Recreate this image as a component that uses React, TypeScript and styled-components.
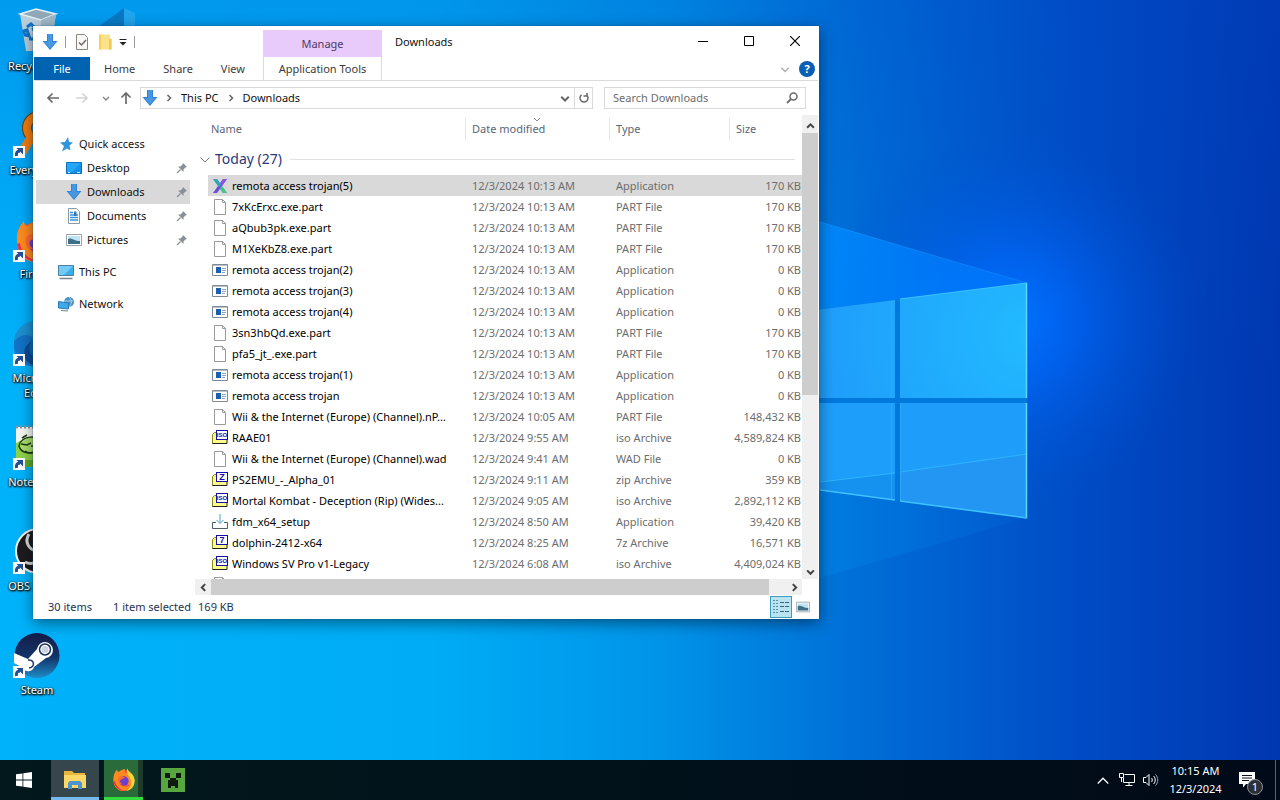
import React, { useState } from 'react'
import styled, { createGlobalStyle, css } from 'styled-components'

const GlobalStyle = createGlobalStyle`
  * {
    box-sizing: border-box;
  }

  body {
    margin: 0;
    font-family: 'Noto Sans', 'Open Sans', sans-serif;
    font-size: 11px;
    line-height: 16px;
    color: #111;
  }

  button,
  input {
    padding: 0;
    border: none;
    background: none;
    font: inherit;
    color: inherit;
  }

  a {
    color: inherit;
    text-decoration: none;
  }

  ul {
    margin: 0;
    padding: 0;
    list-style: none;
  }

  svg {
    display: block;
    flex: none;
  }
`

const Screen = styled.div`
  display: flex;
  flex-direction: column;
  height: 100vh;
  overflow: hidden;
`

const Desktop = styled.main`
  position: relative;
  flex: 1;
  min-height: 0;
  overflow: hidden;
  background: #0078d7;
`

const WallpaperSvg = styled.svg`
  position: absolute;
  inset: 0;
  width: 100%;
  height: 100%;
`

/* desktop shortcuts */

const ShortcutGrid = styled.div`
  position: relative;
  display: grid;
  grid-template-rows: repeat(7, 104px);
  grid-auto-flow: column;
  grid-auto-columns: 74px;
  justify-content: start;
  padding-top: 8px;
`

const Shortcut = styled.a`
  display: flex;
  flex-direction: column;
  align-items: center;
  gap: 2px;
  line-height: 15px;
  text-align: center;
  color: #fff;
  text-shadow: 0 1px 2px #000, 1px 1px 2px #000, 0 0 2px rgba(0, 0, 0, 0.8);
`

/* explorer window */

const ExplorerWindow = styled.section`
  position: absolute;
  top: 26px;
  left: 33px;
  display: flex;
  flex-direction: column;
  width: min(786px, calc(100% - 66px));
  height: min(593px, calc(100% - 52px));
  padding: 0 1px;
  background: #fff;
  box-shadow: 0 0 1px #0a4a7a, 0 4px 14px rgba(0, 0, 0, 0.45);
`

const TitleBar = styled.header`
  display: flex;
  height: 31px;
`

const QuickToolbar = styled.div`
  display: flex;
  align-items: center;
  width: 229px;
  padding-left: 8px;
`

const ToolButton = styled.button<{ $width?: number }>`
  display: flex;
  align-items: center;
  justify-content: center;
  width: ${({ $width = 23 }) => $width}px;
  height: 22px;
`

const ToolDivider = styled.span`
  width: 1px;
  height: 12px;
  margin: 0 7px;
  background: #9a9a9a;
`

const ManageTab = styled.div`
  width: 119px;
  margin-top: 4px;
  padding-top: 6px;
  text-align: center;
  color: #4c3a66;
  background: #e9cbfb;
`

const WindowTitle = styled.h1`
  flex: 1;
  margin: 0;
  padding-left: 13px;
  font-size: 11px;
  font-weight: 400;
  line-height: 31px;
`

const WindowButton = styled.button`
  display: flex;
  align-items: center;
  justify-content: center;
  width: 46px;
  height: 30px;
`

const TabBar = styled.div`
  display: flex;
  align-items: stretch;
  height: 24px;
  border-bottom: 1px solid #dadbdc;
`

const TabGroup = styled.div`
  display: flex;
  width: 229px;
`

const RibbonTab = styled.button<{ $file?: boolean }>`
  padding: 0 14px;
  color: #3b3b3b;

  ${({ $file }) =>
    $file &&
    css`
      width: 56px;
      color: #fff;
      background: #0063b1;
    `}
`

const ToolsTab = styled.button`
  width: 119px;
  border: solid #e3d3ee;
  border-width: 0 1px;
  color: #3b3b3b;
`

const RibbonEnd = styled.div`
  display: flex;
  align-items: center;
  gap: 8px;
  margin-left: auto;
  padding-right: 3px;
`

const HelpButton = styled.button`
  width: 16px;
  height: 16px;
  border-radius: 50%;
  font-weight: 700;
  line-height: 16px;
  color: #fff;
  background: #0a5fb4;
`

const AddressBar = styled.div`
  display: flex;
  align-items: center;
  height: 34px;
  padding: 0 12px 0 7px;
`

const AddressBox = styled.nav`
  display: flex;
  flex: 1;
  align-items: stretch;
  height: 22px;
  border: 1px solid #d9d9d9;
`

const Crumbs = styled.div`
  display: flex;
  flex: 1;
`

const Crumb = styled.button`
  padding: 0 8px;
`

const CrumbArrow = styled.span<{ $first?: boolean }>`
  display: flex;
  align-items: center;
  padding-left: ${({ $first }) => ($first ? 6 : 0)}px;
`

const AddressButton = styled.button<{ $divided?: boolean }>`
  display: flex;
  align-items: center;
  justify-content: center;
  width: 18px;
  border-left: ${({ $divided }) => ($divided ? '1px solid #d9d9d9' : 'none')};
`

const SearchBox = styled.label`
  display: flex;
  align-items: center;
  width: 202px;
  height: 22px;
  margin-left: 11px;
  padding: 0 7px 0 8px;
  border: 1px solid #d9d9d9;
`

const SearchInput = styled.input`
  flex: 1;
  min-width: 0;
  outline: none;

  &::placeholder {
    color: #6d6d6d;
    opacity: 1;
  }
`

const Body = styled.div`
  display: flex;
  flex: 1;
  min-height: 0;
`

const NavPane = styled.nav`
  width: 161px;
  padding: 17px 5px 0 2px;
`

const NavSection = styled.ul`
  margin-bottom: 8px;
`

const NavLink = styled.a<{ $nested?: boolean; $active?: boolean }>`
  display: flex;
  align-items: center;
  gap: 5px;
  height: 24px;
  padding-left: ${({ $nested }) => ($nested ? 30 : 22)}px;
  padding-right: 2px;
  background: ${({ $active }) => ($active ? '#d9d9d9' : 'transparent')};
`

const NavLabel = styled.span`
  flex: 1;
`

const ListPane = styled.div`
  display: flex;
  flex: 1;
  flex-direction: column;
  min-width: 0;
`

const ListRow = styled.div`
  display: flex;
  flex: 1;
  min-height: 0;
`

const ListViewport = styled.div`
  flex: 1;
  min-width: 0;
  overflow: hidden;
`

const FileTable = styled.table`
  width: 100%;
  table-layout: fixed;
  border-collapse: separate;
  border-spacing: 0;
`

const HeadCell = styled.th<{ $width?: number }>`
  position: relative;
  width: ${({ $width }) => ($width ? `${$width}px` : 'auto')};
  height: 28px;
  padding: 0 0 0 ${({ $width }) => ($width ? 7 : 16)}px;
  font-weight: 400;
  text-align: left;
  color: #5a6678;
  background: ${({ $width }) =>
    $width ? 'linear-gradient(#e5e5e5, #e5e5e5) left center / 1px 22px no-repeat' : 'none'};
`

const SortMark = styled.span`
  position: absolute;
  top: 0;
  left: 50%;
  transform: translateX(-50%);
`

const GroupCell = styled.th`
  height: 32px;
  padding: 0 7px 0 4px;
  font-weight: 400;
`

const GroupTitle = styled.div`
  display: flex;
  align-items: center;
  gap: 4px;
  font-size: 14px;
  color: #2a3a7c;

  &::after {
    content: '';
    flex: 1;
    height: 1px;
    margin-left: 4px;
    background: #e2e2e2;
  }
`

const Cell = styled.td<{ $selected?: boolean; $align?: 'right' }>`
  height: 21px;
  padding: 0 0 0 7px;
  overflow: hidden;
  white-space: nowrap;
  text-align: ${({ $align = 'left' }) => $align};
  color: #6d6d6d;
  background: ${({ $selected }) => ($selected ? '#d9d9d9' : 'none')};
`

const SizeCell = styled(Cell)`
  padding: 0 1px 0 0;
`

const NameCell = styled(Cell)`
  padding-left: 4px;
  border-left: 13px solid transparent;
  background-clip: padding-box;
  color: #000;
`

const FileName = styled.div`
  display: flex;
  align-items: center;
  gap: 4px;
`

const VerticalScroll = styled.div`
  display: flex;
  flex-direction: column;
  align-items: center;
  width: 16px;
  padding-top: 2px;
  background: #f0f0f0;
`

const HorizontalScroll = styled.div`
  display: flex;
  align-items: center;
  height: 16px;
  margin-right: 16px;
  background: #f0f0f0;
`

const ScrollButton = styled.button`
  display: flex;
  align-items: center;
  justify-content: center;
  width: 16px;
  height: 16px;
`

const ScrollTrack = styled.div<{ $axis: 'x' | 'y' }>`
  flex: 1;
  align-self: stretch;

  &::before {
    content: '';
    display: block;
    background: #cdcdcd;
    ${({ $axis }) =>
      $axis === 'x' ? 'width: 97%; height: 16px;' : 'width: 16px; height: 61%;'}
  }
`

const StatusBar = styled.footer`
  display: flex;
  align-items: center;
  height: 24px;
  padding: 0 4px 0 14px;
  color: #1e3250;
`

const StatusItem = styled.span`
  margin-right: 21px;

  & + & {
    margin-right: 7px;
  }
`

const ViewButtons = styled.div`
  display: flex;
  align-items: center;
  margin-left: auto;
`

const ViewButton = styled.button<{ $active?: boolean }>`
  display: flex;
  align-items: center;
  justify-content: center;
  width: 22px;
  height: 22px;
  border: 1px solid ${({ $active }) => ($active ? '#3f9cbd' : 'transparent')};
  background: ${({ $active }) => ($active ? '#b9e3f0' : 'none')};
`

/* taskbar */

const Taskbar = styled.footer`
  display: flex;
  align-items: stretch;
  height: 40px;
  color: #fff;
  background: linear-gradient(90deg, #02181c, #01101a 60%, #010a18);
`

const TaskButton = styled.button<{ $state?: 'active' | 'progress' }>`
  display: flex;
  align-items: center;
  justify-content: center;
  width: 48px;
  margin-right: 1px;

  ${({ $state }) =>
    $state === 'active' &&
    css`
      margin-left: 2px;
      margin-right: 0;
      background: #36464d;
      border-top: 3px solid transparent;
      border-bottom: 3px solid #76b9ed;
    `}

  ${({ $state }) =>
    $state === 'progress' &&
    css`
      width: 39px;
      margin: 0 6px 0 5px;
      background: linear-gradient(90deg, #2a6b3c 34px, #1d3b2b 34px);
      border-top: 3px solid transparent;
      border-bottom: 3px solid #2fdc3c;
      background-origin: border-box;
    `}
`

const Tray = styled.div`
  display: flex;
  align-items: center;
  margin-left: auto;
`

const TrayButton = styled.button`
  display: flex;
  align-items: center;
  justify-content: center;
  width: 24px;
  height: 100%;
`

const Clock = styled.button`
  width: 65px;
  line-height: 18px;
  text-align: center;
`

const ActionButton = styled.button`
  position: relative;
  display: flex;
  align-items: center;
  justify-content: center;
  width: 38px;
  height: 100%;
`

const Badge = styled.span`
  position: absolute;
  right: 3px;
  bottom: 5px;
  width: 16px;
  height: 16px;
  border: 1px solid #8b8f94;
  border-radius: 50%;
  line-height: 14px;
  background: #2b3038;
`

const ShowDesktop = styled.button`
  width: 5px;
  height: 100%;
  margin-left: 9px;
  border-left: 1px solid #5b6470;
`

const Wallpaper = () => (
  <WallpaperSvg viewBox='0 0 1280 760' preserveAspectRatio='xMidYMid slice' aria-hidden='true'>
    <defs>
      <linearGradient id='sky' x1='0' y1='0' x2='1' y2='0'>
        <stop offset='0' stopColor='#00b2fa' />
        <stop offset='0.34' stopColor='#00acf6' />
        <stop offset='0.52' stopColor='#0093e8' />
        <stop offset='0.68' stopColor='#006cd6' />
        <stop offset='0.84' stopColor='#004cc6' />
        <stop offset='1' stopColor='#0037b0' />
      </linearGradient>
      <linearGradient id='top' x1='0' y1='0' x2='0' y2='1'>
        <stop offset='0' stopColor='#0048c4' stopOpacity='0.22' />
        <stop offset='0.5' stopColor='#0048c4' stopOpacity='0' />
      </linearGradient>
      <radialGradient id='glow' cx='1010' cy='320' r='190' gradientUnits='userSpaceOnUse'>
        <stop offset='0' stopColor='#0074ff' />
        <stop offset='0.3' stopColor='#0068fa' stopOpacity='0.75' />
        <stop offset='1' stopColor='#0050d0' stopOpacity='0' />
      </radialGradient>
      <linearGradient id='beam' x1='0' y1='0' x2='1' y2='0'>
        <stop offset='0' stopColor='#009cff' />
        <stop offset='1' stopColor='#0078ff' stopOpacity='0.6' />
      </linearGradient>
      <linearGradient id='lower' x1='0' y1='0' x2='1' y2='0'>
        <stop offset='0' stopColor='#0094ea' />
        <stop offset='1' stopColor='#006cdc' stopOpacity='0.2' />
      </linearGradient>
      <radialGradient id='pane' cx='1027' cy='335' r='210' gradientUnits='userSpaceOnUse'>
        <stop offset='0' stopColor='#22baff' />
        <stop offset='1' stopColor='#1f9dfb' />
      </radialGradient>
    </defs>
    <rect width='1280' height='760' fill='url(#sky)' />
    <rect width='1280' height='760' fill='url(#top)' />
    <rect x='700' y='60' width='580' height='540' fill='url(#glow)' />
    <path d='M640 168L1027 283L640 336Z' fill='url(#beam)' />
    <path d='M820 222L1027 283' stroke='#2aa2ff' strokeOpacity='0.3' />
    <path d='M640 468L1027 518L640 630Z' fill='url(#lower)' />
    <path d='M640 332L1027 283V518L640 467Z' fill='#0079dc' />
    <path d='M640 332L895 300V398H640Z' fill='url(#pane)' />
    <path d='M900 299L1027 283V398H900Z' fill='url(#pane)' />
    <path d='M640 403H895V500L640 467Z' fill='#1d9efb' />
    <path d='M900 403H1027V518L900 501Z' fill='#1f9dfa' />
    <path d='M640 502L895 473V500L640 467Z' fill='#1592f0' />
    <path d='M900 472L1027 454V518L900 501Z' fill='#2396f4' />
    <path d='M820 482L895 473M900 472L1027 454' stroke='#2db6ff' />
    <path d='M900 299L1027 283' stroke='#3cc4ff' />
    <path d='M1026.500 283V398M1026.500 403V518' stroke='#5ad8ff' strokeWidth='1.500' />
    <path d='M820 490L895 500M900 501L1027 518' stroke='#3fc2ff' strokeWidth='1.500' />
    <path d='M891.500 301V398M891.500 403V499M900.500 403V500' stroke='#3aaeff' strokeOpacity='0.6' />
  </WallpaperSvg>
)

const ShortcutArrow = () => (
  <g>
    <rect x='0' y='34' width='12' height='12' fill='#fff' />
    <path d='M3.500 44C3 40 4.500 39 7 39' stroke='#234f94' strokeWidth='3' fill='none' />
    <path d='M3.500 36H10v6.500z' fill='#234f94' />
  </g>
)

const FirefoxArt = () => (
  <g>
    <circle cx='24' cy='26' r='20' fill='#ff5a2c' />
    <path d='M4 26C3 16 7 9 11 5c0 4 2 5 4 5 4-4 8-6 12-6-3 3-3 6 0 8 10 0 16 5 17 14-3 14-18 8-18 0-7-4-14 3-8 9 7 6 17 3 20-3-3 12-14 16-22 13C9 42 4 35 4 26z' fill='#ff8a1f' />
    <path d='M30 3c3 7 12 10 14 20 2 12-5 21-16 23 9-6 13-16 7-25-2-5-7-8-5-18z' fill='#ffd43a' />
    <circle cx='24' cy='27' r='9' fill='#6b3fd4' />
    <path d='M14 20c4-3 9-2 12 1-4 0-5 3-8 3-3 3-1 8 4 9-7 2-12-5-8-13z' fill='#ff6a2a' />
    <path d='M4 28c2 13 14 20 25 17C19 46 8 38 7 27z' fill='#f2304a' />
  </g>
)

const desktopArt: Record<string, React.ReactNode> = {
  recycle: (
    <g>
      <path d='M7 6l16-5 20 5-6 37H13z' fill='#b9cfdc' />
      <path d='M7 6l16-5 20 5-15 6z' fill='#8fa9b8' stroke='#e4eff5' strokeWidth='1.500' />
      <path d='M28 12l15-6-6 37-9 1z' fill='#9fb8c8' />
      <path d='M14 19l4-3 4 4-3 2M11 23l3-1 2 6-4-1zM16 31h6v-4' stroke='#1273c9' strokeWidth='3' fill='none' />
    </g>
  ),
  everything: (
    <g>
      <circle cx='26' cy='16' r='12' fill='none' stroke='#6a3a0a' strokeWidth='10' />
      <circle cx='26' cy='16' r='12' fill='none' stroke='#ef7c0e' strokeWidth='8' />
      <path d='M18 26L9 40' stroke='#ef7c0e' strokeWidth='9' strokeLinecap='round' />
    </g>
  ),
  firefox: <FirefoxArt />,
  edge: (
    <g>
      <circle cx='24' cy='24' r='23' fill='#0c6ab8' />
      <path d='M1 22C2 8 13 1 24 1c14 0 23 9 23 20H20c-4-6-13-7-19 1z' fill='#1c8fd0' />
      <path d='M1 24c2-8 12-12 20-6-9 6-8 20 4 28C10 48 0 38 1 24z' fill='#1272c4' />
      <path d='M18 22c-5 10 3 20 15 20-8 7-22 2-22-8 0-6 3-10 7-12z' fill='#0b4c94' />
    </g>
  ),
  notepad: (
    <g>
      <path d='M3 3h40v40H3z' fill='#f4f7f0' />
      <path d='M3 3h40' stroke='#8d9399' strokeWidth='3' strokeDasharray='2 2' />
      <path d='M3 19c12-7 28-7 40 0v24H3z' fill='#8fd24a' />
      <path d='M6 22c2-11 20-12 25-2 1 9-22 14-25 2z' fill='#a9dd6c' stroke='#1d3a16' strokeWidth='1.500' />
      <path d='M8 20l6 1 4-2M18 22h6M9 14l5-3M12 27c4 3 8 2 12-1' stroke='#1d3a16' strokeWidth='1.500' fill='none' />
      <path d='M3 36h40v7H3z' fill='#5cab2b' />
    </g>
  ),
  obs: (
    <g>
      <circle cx='25' cy='23' r='22' fill='#1c1b20' stroke='#f2f2f2' strokeWidth='2' />
      <path d='M16 6c-5 8 0 16 8 17M34 12c6 6 4 15-4 18M12 34c8 4 15-1 15-10' stroke='#d8d8d8' strokeWidth='3' fill='none' />
    </g>
  ),
  steam: (
    <g>
      <defs>
        <linearGradient id='steam' x1='0' y1='0' x2='0' y2='1'>
          <stop offset='0' stopColor='#141c48' />
          <stop offset='0.55' stopColor='#12356a' />
          <stop offset='1' stopColor='#1f8cc8' />
        </linearGradient>
      </defs>
      <circle cx='24' cy='23.500' r='22.500' fill='url(#steam)' />
      <path d='M1 21l14 6 9-10a8 8 0 1 1 9 9l-12 9a6 6 0 0 1-11 1L1 31z' fill='#fff' />
      <circle cx='32' cy='17.500' r='5.500' fill='#fff' stroke='#16305f' strokeWidth='1.500' />
      <circle cx='32' cy='17.500' r='3.500' fill='#c9d3e2' />
      <path d='M15 28c6-1 8 7 1 8' stroke='#1b3a6c' strokeWidth='1.500' fill='none' />
    </g>
  ),
}

const DesktopIcon = ({ kind }: { kind: string }) => (
  <svg width='48' height='48' viewBox='0 0 48 48' aria-hidden='true'>
    {desktopArt[kind]}
    {kind !== 'recycle' && <ShortcutArrow />}
  </svg>
)

const CodeIcon = () => (
  <svg width='48' height='48' viewBox='0 0 48 48' aria-hidden='true'>
    <path d='M37 0L14 17 4 20v15l33 13z' fill='#0b6cb6' opacity='0.75' />
    <path d='M37 0l11 5v38l-11 5z' fill='#3fb0ee' opacity='0.5' />
  </svg>
)

const DownArrowIcon = ({ size = 16 }: { size?: number }) => (
  <svg width={size} height={size} viewBox='0 0 16 16' aria-hidden='true'>
    <path d='M5 0h6v7h4.500L8 16 .5 7H5z' fill='#3384d2' />
    <path d='M6 0h4v8h3.500L8 14.500 2.500 8H6z' fill='#4798e2' />
  </svg>
)

const Chevron = ({
  dir,
  size = 8,
  color = '#444',
  weight = 1.5,
}: {
  dir: 'up' | 'down' | 'left' | 'right'
  size?: number
  color?: string
  weight?: number
}) => {
  const paths = {
    up: 'M1 6l3-3 3 3',
    down: 'M1 3l3 3 3-3',
    left: 'M5.500 1l-3 3 3 3',
    right: 'M2.500 1l3 3-3 3',
  }

  return (
    <svg width={size} height={size} viewBox='0 0 8 8' fill='none' aria-hidden='true'>
      <path d={paths[dir]} stroke={color} strokeWidth={(weight * 8) / size} />
    </svg>
  )
}

const LongArrow = ({ turn = 0, color }: { turn?: number; color: string }) => (
  <svg width='14' height='14' viewBox='0 0 14 14' fill='none' aria-hidden='true'>
    <path
      d='M13 7H2M6.500 2.500L2 7l4.500 4.500'
      stroke={color}
      strokeWidth='1.700'
      transform={`rotate(${turn} 7 7)`}
    />
  </svg>
)

const PinIcon = () => (
  <svg width='12' height='12' viewBox='0 0 12 12' aria-hidden='true'>
    <path d='M7 1l4 4-1.500.5-2 2V10L2 4.500h2.500l2-2z' fill='#8a9096' />
    <path d='M4.500 7.500L1 11' stroke='#8a9096' strokeWidth='1.300' />
  </svg>
)

const PictureArt = () => (
  <g>
    <path d='M.5 2.500h15v11H.5z' fill='#fff' stroke='#9aa3ab' />
    <path d='M2 4h12v8H2z' fill='#bfe2f5' />
    <path d='M2 7c3-2 6 2 12 2v3H2z' fill='#3f6f86' />
  </g>
)

const navArt: Record<string, React.ReactNode> = {
  star: <path d='M10 1l1 5 4 .5-3.500 3 1 5-3.500-2L4 15.500l2-5.500-4-3.500 5-.5z' fill='#2f94de' />,
  desktop: (
    <g>
      <path d='M.5 2.500h15v11H.5z' fill='#1292ea' stroke='#0b6fbd' />
      <path d='M1 3h14l-9 9H1z' fill='#25a6f7' />
      <path d='M2 12.500h2M11 12.500h3' stroke='#d8efff' />
    </g>
  ),
  documents: (
    <g>
      <path d='M2.500.5h8l3 3v12h-11z' fill='#fff' stroke='#8b98a5' />
      <path d='M4 4.500h3M4 7h8M4 9.500h8M4 12h8' stroke='#3a93d6' strokeWidth='1.300' />
      <path d='M8 3.500h2.500V8H8z' fill='#2a76b8' />
    </g>
  ),
  pictures: <PictureArt />,
  pc: (
    <g>
      <path d='M.5 1.500h15v10H.5z' fill='#3aaeea' stroke='#4c7fa3' />
      <path d='M1 2h14L6 11H1z' fill='#74cbf5' />
      <path d='M1.500 14.500h13' stroke='#75838e' strokeWidth='1.500' />
    </g>
  ),
  network: (
    <g>
      <circle cx='11' cy='6' r='5' fill='#4a90c4' />
      <path d='M11 1c3 3 3 7 0 10M6 5h9' stroke='#a9d4ee' fill='none' />
      <path d='M.5 5.500l10 1.500v6l-10-1z' fill='#3fa9e8' stroke='#2a7cb3' />
      <path d='M3 14.500l7 .5' stroke='#65869c' />
    </g>
  ),
}

const NavIcon = ({ kind }: { kind: string }) =>
  kind === 'downloads' ? (
    <DownArrowIcon />
  ) : (
    <svg width='16' height='16' viewBox='0 0 16 16' aria-hidden='true'>
      {navArt[kind]}
    </svg>
  )

const ArchiveArt = ({ tag }: { tag: string }) => (
  <g>
    <path d='M.5 13.500V4.500l2-2h3V13z' fill='#f6f65a' stroke='#8a8a1c' />
    <path d='M1 13.500V5h14v8.500z' fill='#fbfb8a' />
    <path d='M.5 13.500H15V10' stroke='#222' fill='none' />
    <rect x='4.500' y='.5' width='11' height='9' fill='#fff' stroke='#1410a8' />
    <text
      x='10'
      y={tag.length > 1 ? 7 : 8}
      textAnchor='middle'
      fontFamily='Liberation Sans, sans-serif'
      fontSize={tag.length > 1 ? 6 : 9}
      fontWeight='700'
      fill='#1410a8'
    >
      {tag}
    </text>
  </g>
)

const fileArt: Record<string, React.ReactNode> = {
  remota: (
    <g>
      <path d='M1 1h4l10 14h-4z' fill='#2bb59a' />
      <path d='M11 1h4L5 15H1z' fill='#6a4be0' />
      <path d='M8 6l3-5h4L10 8z' fill='#8a55e8' />
      <path d='M1 1h4l4 5.500L7 9z' fill='#37a3b8' />
      <path d='M9 8l1.500 1L15 15h-4L8 11z' fill='#4cc08c' />
    </g>
  ),
  page: (
    <g>
      <path d='M2.500.5h8l3 3v12h-11z' fill='#fff' stroke='#9a9a9a' />
      <path d='M10.500.5v3h3' fill='none' stroke='#9a9a9a' />
    </g>
  ),
  app: (
    <g>
      <path d='M.5 2.500h15v11H.5z' fill='#fff' stroke='#7f8a94' />
      <path d='M1 3.500h14' stroke='#b9c2ca' />
      <path d='M4 5h5v6H4z' fill='#1b5fae' />
      <path d='M10 6.500h4M10 8.500h4M10 10.500h3' stroke='#8aa6c2' />
    </g>
  ),
  iso: <ArchiveArt tag='ISO' />,
  zip: <ArchiveArt tag='Z' />,
  seven: <ArchiveArt tag='7' />,
  setup: (
    <g>
      <path d='M.5 8.500v6h15v-6H12M4 8.500H.5' fill='none' stroke='#4b5c6b' />
      <path d='M8 0v9M4.500 6L8 9.500 11.500 6' stroke='#4ea3c8' fill='none' />
    </g>
  ),
}

const shortcuts = [
  { kind: 'recycle', name: 'Recycle Bin' },
  { kind: 'everything', name: 'Everything' },
  { kind: 'firefox', name: 'Firefox' },
  { kind: 'edge', name: 'Microsoft Edge' },
  { kind: 'notepad', name: 'Notepad++' },
  { kind: 'obs', name: 'OBS Studio' },
  { kind: 'steam', name: 'Steam' },
]

const navSections = [
  [
    { kind: 'star', name: 'Quick access' },
    { kind: 'desktop', name: 'Desktop', pinned: true },
    { kind: 'downloads', name: 'Downloads', pinned: true },
    { kind: 'documents', name: 'Documents', pinned: true },
    { kind: 'pictures', name: 'Pictures', pinned: true },
  ],
  [{ kind: 'pc', name: 'This PC' }],
  [{ kind: 'network', name: 'Network' }],
]

const files = [
  ['remota', 'remota access trojan(5)', '10:13 AM', 'Application', '170 KB'],
  ['page', '7xKcErxc.exe.part', '10:13 AM', 'PART File', '170 KB'],
  ['page', 'aQbub3pk.exe.part', '10:13 AM', 'PART File', '170 KB'],
  ['page', 'M1XeKbZ8.exe.part', '10:13 AM', 'PART File', '170 KB'],
  ['app', 'remota access trojan(2)', '10:13 AM', 'Application', '0 KB'],
  ['app', 'remota access trojan(3)', '10:13 AM', 'Application', '0 KB'],
  ['app', 'remota access trojan(4)', '10:13 AM', 'Application', '0 KB'],
  ['page', '3sn3hbQd.exe.part', '10:13 AM', 'PART File', '170 KB'],
  ['page', 'pfa5_jt_.exe.part', '10:13 AM', 'PART File', '170 KB'],
  ['app', 'remota access trojan(1)', '10:13 AM', 'Application', '0 KB'],
  ['app', 'remota access trojan', '10:13 AM', 'Application', '0 KB'],
  ['page', 'Wii & the Internet (Europe) (Channel).nP...', '10:05 AM', 'PART File', '148,432 KB'],
  ['iso', 'RAAE01', '9:55 AM', 'iso Archive', '4,589,824 KB'],
  ['page', 'Wii & the Internet (Europe) (Channel).wad', '9:41 AM', 'WAD File', '0 KB'],
  ['zip', 'PS2EMU_-_Alpha_01', '9:11 AM', 'zip Archive', '359 KB'],
  ['iso', 'Mortal Kombat - Deception (Rip) (Wides...', '9:05 AM', 'iso Archive', '2,892,112 KB'],
  ['setup', 'fdm_x64_setup', '8:50 AM', 'Application', '39,420 KB'],
  ['seven', 'dolphin-2412-x64', '8:25 AM', '7z Archive', '16,571 KB'],
  ['iso', 'Windows SV Pro v1-Legacy', '6:08 AM', 'iso Archive', '4,409,024 KB'],
  ['page', '', '', '', ''],
]

const FileList = () => {
  const [selected, setSelected] = useState(0)

  return (
    <ListPane>
      <ListRow>
        <ListViewport>
          <FileTable>
            <thead>
              <tr>
                <HeadCell>Name</HeadCell>
                <HeadCell $width={144}>
                  Date modified
                  <SortMark>
                    <Chevron dir='down' color='#8c8c8c' weight={1} />
                  </SortMark>
                </HeadCell>
                <HeadCell $width={120}>Type</HeadCell>
                <HeadCell $width={73}>Size</HeadCell>
              </tr>
            </thead>
            <tbody>
              <tr>
                <GroupCell colSpan={4}>
                  <GroupTitle>
                    <Chevron dir='down' size={12} color='#777' weight={1} />
                    Today (27)
                  </GroupTitle>
                </GroupCell>
              </tr>
              {files.map(([kind, name, time, type, size], i) => (
                <tr key={i} onClick={() => setSelected(i)}>
                  <NameCell $selected={i === selected}>
                    <FileName>
                      <svg width='16' height='16' viewBox='0 0 16 16' aria-hidden='true'>
                        {fileArt[kind]}
                      </svg>
                      {name}
                    </FileName>
                  </NameCell>
                  <Cell $selected={i === selected}>{time && `12/3/2024 ${time}`}</Cell>
                  <Cell $selected={i === selected}>{type}</Cell>
                  <SizeCell $selected={i === selected} $align='right'>
                    {size}
                  </SizeCell>
                </tr>
              ))}
            </tbody>
          </FileTable>
        </ListViewport>
        <VerticalScroll>
          <ScrollButton aria-label='Scroll up'>
            <Chevron dir='up' size={9} weight={2} />
          </ScrollButton>
          <ScrollTrack $axis='y' />
          <ScrollButton aria-label='Scroll down'>
            <Chevron dir='down' size={9} weight={2} />
          </ScrollButton>
        </VerticalScroll>
      </ListRow>
      <HorizontalScroll>
        <ScrollButton aria-label='Scroll left'>
          <Chevron dir='left' size={9} weight={2} />
        </ScrollButton>
        <ScrollTrack $axis='x' />
        <ScrollButton aria-label='Scroll right'>
          <Chevron dir='right' size={9} weight={2} />
        </ScrollButton>
      </HorizontalScroll>
    </ListPane>
  )
}

const Explorer = () => (
  <ExplorerWindow aria-label='Downloads'>
    <TitleBar>
      <QuickToolbar>
        <ToolButton $width={16} aria-label='Window menu'>
          <DownArrowIcon />
        </ToolButton>
        <ToolDivider />
        <ToolButton $width={18} aria-label='Properties'>
          <svg width='14' height='16' viewBox='0 0 14 16' fill='none' aria-hidden='true'>
            <path d='M1.500.5h8l3 3v12h-11z' fill='#fbf7f4' stroke='#8d8782' />
            <path d='M4 8.500l2.500 2.500L11 6' stroke='#6b6b6b' strokeWidth='1.500' />
          </svg>
        </ToolButton>
        <ToolButton $width={28} aria-label='New folder'>
          <svg width='14' height='16' viewBox='0 0 14 16' aria-hidden='true'>
            <path d='M1 .5h11v4h1.500v11H1z' fill='#fbe28a' />
            <path d='M1 .5h2v15H1z' fill='#f7cf52' />
            <path d='M11 5h2.500v10.500H11z' fill='#efc94c' />
          </svg>
        </ToolButton>
        <ToolButton $width={8} aria-label='Customize toolbar'>
          <svg width='8' height='8' viewBox='0 0 8 8' aria-hidden='true'>
            <path d='M.5 1.500h7' stroke='#222' />
            <path d='M.5 4h7L4 7.500z' fill='#222' />
          </svg>
        </ToolButton>
        <ToolDivider />
      </QuickToolbar>
      <ManageTab>Manage</ManageTab>
      <WindowTitle>Downloads</WindowTitle>
      <WindowButton aria-label='Minimize'>
        <svg width='10' height='10' viewBox='0 0 10 10' aria-hidden='true'>
          <path d='M0 5.500h10' stroke='#000' />
        </svg>
      </WindowButton>
      <WindowButton aria-label='Maximize'>
        <svg width='10' height='10' viewBox='0 0 10 10' aria-hidden='true'>
          <path d='M.5.5h9v9h-9z' stroke='#000' fill='none' />
        </svg>
      </WindowButton>
      <WindowButton aria-label='Close'>
        <svg width='10' height='10' viewBox='0 0 10 10' aria-hidden='true'>
          <path d='M0 0l10 10M10 0L0 10' stroke='#000' strokeWidth='1.200' />
        </svg>
      </WindowButton>
    </TitleBar>
    <TabBar>
      <TabGroup>
        <RibbonTab $file>File</RibbonTab>
        <RibbonTab>Home</RibbonTab>
        <RibbonTab>Share</RibbonTab>
        <RibbonTab>View</RibbonTab>
      </TabGroup>
      <ToolsTab>Application Tools</ToolsTab>
      <RibbonEnd>
        <ToolButton $width={12} aria-label='Expand the ribbon'>
          <Chevron dir='down' size={10} color='#b0b0b0' />
        </ToolButton>
        <HelpButton aria-label='Help'>?</HelpButton>
      </RibbonEnd>
    </TabBar>
    <AddressBar>
      <ToolButton aria-label='Back'>
        <LongArrow color='#6a6a6a' />
      </ToolButton>
      <ToolButton $width={36} aria-label='Forward'>
        <LongArrow turn={180} color='#d3d3d3' />
      </ToolButton>
      <ToolButton $width={12} aria-label='Recent locations'>
        <Chevron dir='down' color='#8a8a8a' />
      </ToolButton>
      <ToolButton $width={28} aria-label='Up'>
        <LongArrow turn={90} color='#6a6a6a' />
      </ToolButton>
      <AddressBox aria-label='Address'>
        <AddressButton aria-label='Downloads folder'>
          <DownArrowIcon />
        </AddressButton>
        <Crumbs>
          <CrumbArrow $first>
            <Chevron dir='right' color='#666' />
          </CrumbArrow>
          <Crumb>This PC</Crumb>
          <CrumbArrow>
            <Chevron dir='right' color='#666' />
          </CrumbArrow>
          <Crumb>Downloads</Crumb>
        </Crumbs>
        <AddressButton aria-label='Previous locations'>
          <Chevron dir='down' size={10} color='#666' weight={2} />
        </AddressButton>
        <AddressButton $divided aria-label='Refresh'>
          <svg width='12' height='12' viewBox='0 0 12 12' fill='none' aria-hidden='true'>
            <path d='M8.500 2.800a4 4 0 1 1-5 0M3 1v3h3.500' stroke='#6a6a6a' strokeWidth='1.500' transform='matrix(-1 0 0 1 12 0)' />
          </svg>
        </AddressButton>
      </AddressBox>
      <SearchBox>
        <SearchInput type='text' placeholder='Search Downloads' aria-label='Search Downloads' />
        <svg width='12' height='12' viewBox='0 0 12 12' fill='none' aria-hidden='true'>
          <circle cx='7.500' cy='4.500' r='3.500' stroke='#6a6a6a' strokeWidth='1.500' />
          <path d='M5 7L1 11' stroke='#6a6a6a' strokeWidth='1.800' />
        </svg>
      </SearchBox>
    </AddressBar>
    <Body>
      <NavPane aria-label='Folders'>
        {navSections.map((section) => (
          <NavSection key={section[0].name}>
            {section.map(({ kind, name, pinned }: any) => (
              <li key={name}>
                <NavLink href='#' $nested={pinned} $active={name === 'Downloads'}>
                  <NavIcon kind={kind} />
                  <NavLabel>{name}</NavLabel>
                  {pinned && <PinIcon />}
                </NavLink>
              </li>
            ))}
          </NavSection>
        ))}
      </NavPane>
      <FileList />
    </Body>
    <StatusBar>
      <StatusItem>30 items</StatusItem>
      <StatusItem>1 item selected</StatusItem>
      <StatusItem>169 KB</StatusItem>
      <ViewButtons>
        <ViewButton $active aria-label='Details view'>
          <svg width='18' height='16' viewBox='0 0 18 16' fill='none' aria-hidden='true'>
            <path d='M1 1.500h5M1 4.500h5M1 7.500h5M1 10.500h5M1 13.500h5' stroke='#5d8ea8' strokeDasharray='2 1' />
            <path d='M8 3.500h4M13 3.500h4M8 7.500h4M13 7.500h4M8 12.500h4M13 12.500h4' stroke='#3d6378' />
          </svg>
        </ViewButton>
        <ViewButton aria-label='Large icons view'>
          <svg width='14' height='14' viewBox='0 0 16 16' aria-hidden='true'>
            <PictureArt />
          </svg>
        </ViewButton>
      </ViewButtons>
    </StatusBar>
  </ExplorerWindow>
)

const App = () => (
  <Screen>
    <GlobalStyle />
    <Desktop>
      <Wallpaper />
      <ShortcutGrid>
        {shortcuts.map(({ kind, name }) => (
          <Shortcut key={kind} href='#'>
            <DesktopIcon kind={kind} />
            {name}
          </Shortcut>
        ))}
        <Shortcut href='#' aria-label='Code'>
          <CodeIcon />
        </Shortcut>
      </ShortcutGrid>
      <Explorer />
    </Desktop>
    <Taskbar>
      <TaskButton aria-label='Start'>
        <svg width='16' height='16' viewBox='0 0 16 16' aria-hidden='true'>
          <path d='M0 2.300L6.500 1.400v6.200H0zM7.300 1.300L16 0v7.600H7.300zM0 8.400h6.500v6.200L0 13.700zM7.300 8.400H16V16l-8.700-1.300z' fill='#fff' />
        </svg>
      </TaskButton>
      <TaskButton $state='active' aria-label='File Explorer'>
        <svg width='24' height='22' viewBox='0 0 24 22' aria-hidden='true'>
          <path d='M1 2h8l2 2h11v15H1z' fill='#e8b63c' />
          <path d='M1 6h22v13H1z' fill='#fbd768' />
          <path d='M5 20v-6l2-2h10l2 2v6h-4v-4H9v4z' fill='#4a94cf' />
        </svg>
      </TaskButton>
      <TaskButton $state='progress' aria-label='Firefox'>
        <svg width='24' height='24' viewBox='2 2 44 46' aria-hidden='true'>
          <FirefoxArt />
        </svg>
      </TaskButton>
      <TaskButton aria-label='Minecraft'>
        <svg width='24' height='24' viewBox='0 0 24 24' aria-hidden='true'>
          <path d='M0 0h24v24H0z' fill='#58a63e' />
          <path d='M4 5h5v5H4zM15 5h5v5h-5zM9 10h6v2h2v8h-3v-2h-4v2H7v-8h2z' fill='#0d1a0c' />
        </svg>
      </TaskButton>
      <Tray>
        <TrayButton aria-label='Show hidden icons'>
          <Chevron dir='up' size={14} color='#fff' weight={1.3} />
        </TrayButton>
        <TrayButton aria-label='Network'>
          <svg width='16' height='16' viewBox='0 0 16 16' fill='none' aria-hidden='true'>
            <path d='M5.500 2.500h10v8h-11V6M10 10.500v3M6.500 13.500h7M.5 1.500h4v4h-4zM2.500 5.500V10' stroke='#fff' />
          </svg>
        </TrayButton>
        <TrayButton aria-label='Volume'>
          <svg width='16' height='16' viewBox='0 0 16 16' fill='none' aria-hidden='true'>
            <path d='M.5 5.500h2.500l3-3v11l-3-3H.5zM8.500 6c1 1 1 3 0 4M10.500 4c2.300 2 2.300 6 0 8' stroke='#fff' />
            <path d='M12.500 2.500c3 3 3 8 0 11' stroke='#9aa2aa' />
          </svg>
        </TrayButton>
        <Clock>
          10:15 AM
          <br />
          12/3/2024
        </Clock>
        <ActionButton aria-label='Notifications, 1 new'>
          <svg width='16' height='16' viewBox='0 0 16 16' aria-hidden='true'>
            <path d='M0 0h16v12H7l-3 3.500V12H0z' fill='#fff' />
            <path d='M3 3.500h10M3 6h10M3 8.500h7' stroke='#06121c' />
          </svg>
          <Badge>1</Badge>
        </ActionButton>
        <ShowDesktop aria-label='Show desktop' />
      </Tray>
    </Taskbar>
  </Screen>
)

export default App
